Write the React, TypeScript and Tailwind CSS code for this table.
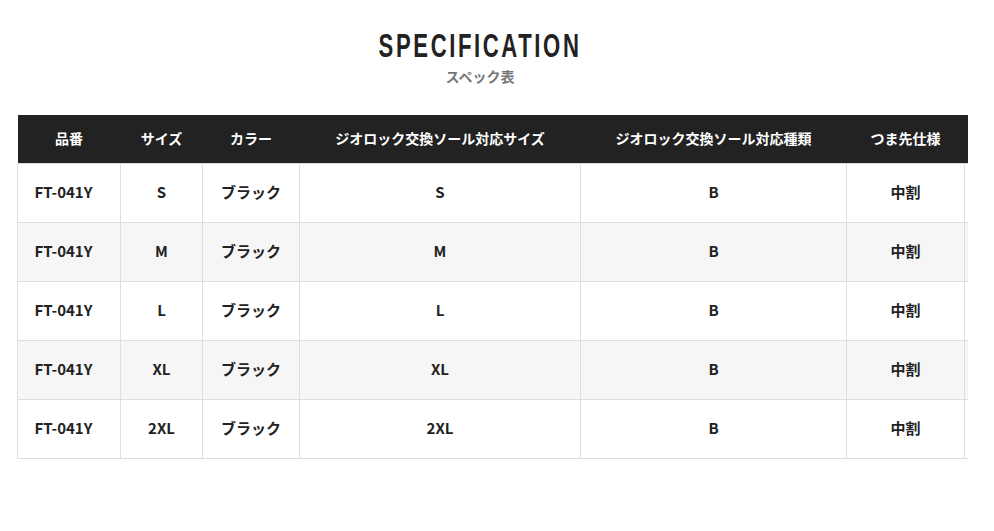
const headers = ['品番', 'サイズ', 'カラー', 'ジオロック交換ソール対応サイズ', 'ジオロック交換ソール対応種類', 'つま先仕様', ''];
const widths = ['w-[103px]', 'w-[82px]', 'w-[97px]', 'w-[281px]', 'w-[266px]', 'w-[118px]', 'w-[160px]'];
const sizes = ['S', 'M', 'L', 'XL', '2XL'];

export default function App() {
  return (
    <div className="min-h-[531px] w-[994px] bg-white" style={{ fontFamily: '"Noto Sans CJK JP", "Noto Sans", sans-serif' }}>
      {/* Title */}
      <div className="flex flex-col items-center pt-[26px] pr-[34px]">
        <h2
          className="inline-block scale-x-[0.65] text-[34px] font-bold leading-[38px] tracking-[4px] text-[#222]"
          style={{ fontFamily: '"Liberation Sans", Arial, sans-serif' }}
        >
          SPECIFICATION
        </h2>
        <p className="mt-[2px] text-[14px] font-bold leading-[20px] text-[#777]">スペック表</p>
      </div>

      {/* Table */}
      <div className="ml-[17px] mt-[29px] w-[951px] overflow-hidden">
        <table className="w-[1107px] table-fixed border-collapse">
          <thead>
            <tr className="h-[48px] bg-[#222]">
              {headers.map((h, i) => (
                <th key={i} className={`${widths[i]} text-center text-[14px] font-bold text-white`}>
                  {h}
                </th>
              ))}
            </tr>
          </thead>
          <tbody>
            {sizes.map((s, r) => (
              <tr key={s} className={`h-[59px] ${r % 2 === 1 ? 'bg-[#f6f6f6]' : 'bg-white'}`}>
                {['FT-041Y', s, 'ブラック', s, 'B', '中割', ''].map((c, i) => (
                  <td
                    key={i}
                    className={`border border-[#dedede] text-center text-[15px] font-bold text-[#222] ${i === 0 ? 'pr-[11px]' : ''}`}
                  >
                    {c}
                  </td>
                ))}
              </tr>
            ))}
          </tbody>
        </table>
      </div>
    </div>
  );
}
